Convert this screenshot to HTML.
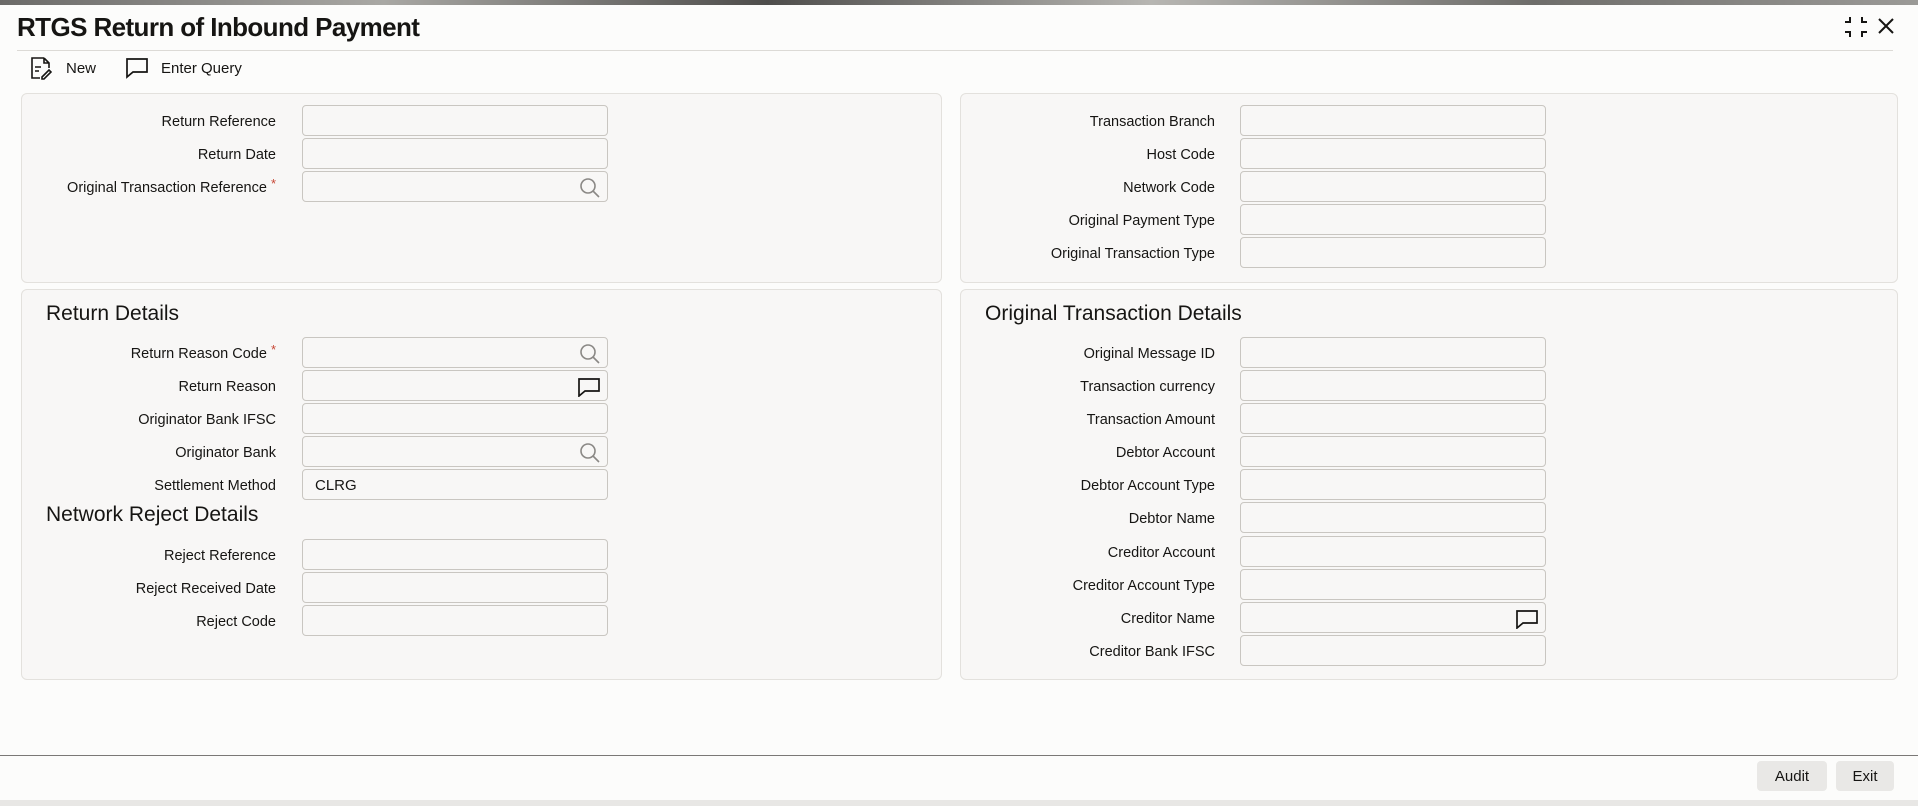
<!DOCTYPE html>
<html><head><style>
*{box-sizing:border-box;margin:0;padding:0}
body{width:1918px;height:806px;overflow:hidden;background:#fcfcfb;font-family:"Liberation Sans",sans-serif;color:#161513;position:relative}
.top{position:absolute;left:0;top:0;width:1918px;height:5px;background:linear-gradient(90deg,#6b6a68,#a9a8a4 20%,#4e4d4b 40%,#b7b6b2 60%,#6e6d6a 80%,#9b9a97)}
.title{position:absolute;left:17px;top:12px;font-size:26px;font-weight:bold;letter-spacing:-0.6px}
.sep{position:absolute;left:17px;top:50px;width:1876px;height:1px;background:#dcdad6}
.tb{position:absolute;top:58px;font-size:15px;display:flex;align-items:center;gap:10px;height:20px}
.panel{position:absolute;background:#f8f7f6;border:1px solid #e3e1dd;border-radius:6px}
.lbl{position:absolute;font-size:14.5px;text-align:right;width:260px;line-height:31px;padding-top:2px}
.lbl .ast{color:#c74634;font-size:13px;vertical-align:top;line-height:22px;margin-left:4px}
.in{position:absolute;width:306px;height:31px;border:1px solid #c9c6c1;border-radius:4px;background:#f8f7f6;font-size:15px;line-height:31px;padding-left:12px}
.h{position:absolute;font-size:21px;top:0}
.ico{position:absolute;right:6px;top:5px}
.btn{position:absolute;top:761px;height:30px;background:#e9e8e6;border-radius:4px;font-size:15px;text-align:center;line-height:31px}
</style></head><body>
<div class="top"></div>
<div class="title">RTGS Return of Inbound Payment</div>
<svg style="position:absolute;left:1844px;top:16px" width="24" height="22" viewBox="0 0 24 22" fill="none" stroke="#161513" stroke-width="2"><path d="M1 6h5V1M23 6h-5V1M1 16h5v5M23 16h-5v5"/></svg>
<svg style="position:absolute;left:1878px;top:18px" width="16" height="16" viewBox="0 0 16 16" stroke="#161513" stroke-width="2"><path d="M1 1l14 14M15 1L1 15"/></svg>
<div class="sep"></div>
<div class="tb" style="left:30px"><svg width="22" height="24" viewBox="0 0 22 24" fill="none" stroke="#161513" stroke-width="1.6"><path d="M14 2H2v20h8M14 2l5 5v5M14 2v5h5M5 11h6M5 15h4M12 21l7-7 2 2-7 7h-2z"/></svg><span style="margin-left:4px">New</span></div>
<div class="tb" style="left:125px"><svg width="24" height="22" viewBox="0 0 24 22" fill="none" stroke="#161513" stroke-width="1.7"><path d="M2 2h20v13H8l-6 5z"/></svg><span style="margin-left:2px">Enter Query</span></div>

<div class="panel" style="left:21px;top:93px;width:921px;height:190px"></div>
<div class="panel" style="left:960px;top:93px;width:938px;height:190px"></div>
<div class="panel" style="left:21px;top:289px;width:921px;height:391px"></div>
<div class="panel" style="left:960px;top:289px;width:938px;height:391px"></div>

<div class="lbl" style="left:16px;top:105px">Return Reference</div><div class="in" style="left:302px;top:105px"></div>
<div class="lbl" style="left:16px;top:138px">Return Date</div><div class="in" style="left:302px;top:138px"></div>
<div class="lbl" style="left:0px;top:171px;width:276px">Original Transaction Reference<span class="ast">*</span></div><div class="in" style="left:302px;top:171px"><svg class="ico" width="22" height="22" viewBox="0 0 22 22" fill="none" stroke="#8a8885" stroke-width="1.6"><circle cx="9" cy="9" r="7"/><path d="M14 14l6 6"/></svg></div>

<div class="lbl" style="left:955px;top:105px">Transaction Branch</div><div class="in" style="left:1240px;top:105px"></div>
<div class="lbl" style="left:955px;top:138px">Host Code</div><div class="in" style="left:1240px;top:138px"></div>
<div class="lbl" style="left:955px;top:171px">Network Code</div><div class="in" style="left:1240px;top:171px"></div>
<div class="lbl" style="left:955px;top:204px">Original Payment Type</div><div class="in" style="left:1240px;top:204px"></div>
<div class="lbl" style="left:955px;top:237px">Original Transaction Type</div><div class="in" style="left:1240px;top:237px"></div>

<div class="h" style="left:46px;top:302px">Return Details</div>
<div class="lbl" style="left:0px;top:337px;width:276px">Return Reason Code<span class="ast">*</span></div><div class="in" style="left:302px;top:337px"><svg class="ico" width="22" height="22" viewBox="0 0 22 22" fill="none" stroke="#8a8885" stroke-width="1.6"><circle cx="9" cy="9" r="7"/><path d="M14 14l6 6"/></svg></div>
<div class="lbl" style="left:16px;top:370px">Return Reason</div><div class="in" style="left:302px;top:370px"><svg class="ico" style="top:6px" width="24" height="20" viewBox="0 0 24 20" fill="none" stroke="#161513" stroke-width="1.7"><path d="M2 2h20v12H8l-6 5z"/></svg></div>
<div class="lbl" style="left:16px;top:403px">Originator Bank IFSC</div><div class="in" style="left:302px;top:403px"></div>
<div class="lbl" style="left:16px;top:436px">Originator Bank</div><div class="in" style="left:302px;top:436px"><svg class="ico" width="22" height="22" viewBox="0 0 22 22" fill="none" stroke="#8a8885" stroke-width="1.6"><circle cx="9" cy="9" r="7"/><path d="M14 14l6 6"/></svg></div>
<div class="lbl" style="left:16px;top:469px">Settlement Method</div><div class="in" style="left:302px;top:469px">CLRG</div>
<div class="h" style="left:46px;top:503px">Network Reject Details</div>
<div class="lbl" style="left:16px;top:539px">Reject Reference</div><div class="in" style="left:302px;top:539px"></div>
<div class="lbl" style="left:16px;top:572px">Reject Received Date</div><div class="in" style="left:302px;top:572px"></div>
<div class="lbl" style="left:16px;top:605px">Reject Code</div><div class="in" style="left:302px;top:605px"></div>

<div class="h" style="left:985px;top:302px">Original Transaction Details</div>
<div class="lbl" style="left:955px;top:337px">Original Message ID</div><div class="in" style="left:1240px;top:337px"></div>
<div class="lbl" style="left:955px;top:370px">Transaction currency</div><div class="in" style="left:1240px;top:370px"></div>
<div class="lbl" style="left:955px;top:403px">Transaction Amount</div><div class="in" style="left:1240px;top:403px"></div>
<div class="lbl" style="left:955px;top:436px">Debtor Account</div><div class="in" style="left:1240px;top:436px"></div>
<div class="lbl" style="left:955px;top:469px">Debtor Account Type</div><div class="in" style="left:1240px;top:469px"></div>
<div class="lbl" style="left:955px;top:502px">Debtor Name</div><div class="in" style="left:1240px;top:502px"></div>
<div class="lbl" style="left:955px;top:536px">Creditor Account</div><div class="in" style="left:1240px;top:536px"></div>
<div class="lbl" style="left:955px;top:569px">Creditor Account Type</div><div class="in" style="left:1240px;top:569px"></div>
<div class="lbl" style="left:955px;top:602px">Creditor Name</div><div class="in" style="left:1240px;top:602px"><svg class="ico" style="top:6px" width="24" height="20" viewBox="0 0 24 20" fill="none" stroke="#161513" stroke-width="1.7"><path d="M2 2h20v12H8l-6 5z"/></svg></div>
<div class="lbl" style="left:955px;top:635px">Creditor Bank IFSC</div><div class="in" style="left:1240px;top:635px"></div>

<div style="position:absolute;left:0;top:755px;width:1918px;height:1px;background:#7a7876"></div>
<div class="btn" style="left:1757px;width:70px">Audit</div>
<div class="btn" style="left:1836px;width:58px">Exit</div>
<div style="position:absolute;left:0;top:800px;width:1918px;height:6px;background:#e8e7e5"></div>
</body></html>
